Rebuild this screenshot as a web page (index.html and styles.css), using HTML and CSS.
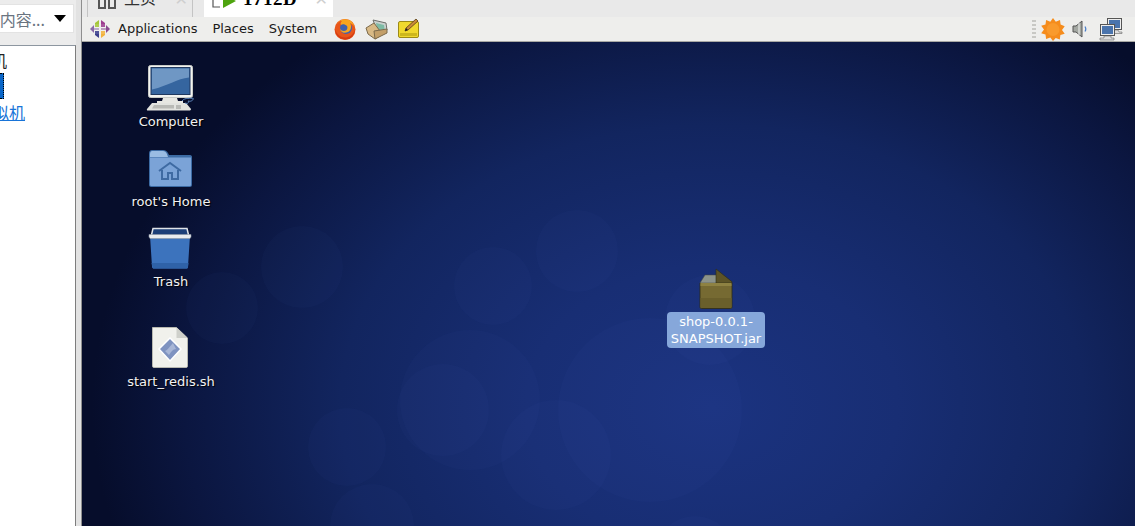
FILE: index.html
```html
<!DOCTYPE html>
<html lang="zh">
<head>
<meta charset="utf-8">
<title>VMware</title>
<link rel="stylesheet" href="styles.css">
</head>
<body>
<div class="app">
  <aside class="side">
    <div class="side-top">
      <div class="select">
        <span class="select-text">内容...</span>
        <span class="caret"></span>
      </div>
    </div>
    <div class="tree">
      <div class="tree-row first">虚拟机</div>
      <div class="tree-row sel"><span class="sel-box"></span></div>
      <div class="tree-row link"><a>虚拟机</a></div>
    </div>
  </aside>
  <main class="main">
    <div class="tabs">
      <div class="tab">
        <svg class="tab-ico" width="18" height="12" viewBox="0 0 18 12"><g fill="none" stroke="#555" stroke-width="2"><rect x="1" y="-6" width="6" height="14"/><rect x="11" y="-6" width="6" height="14"/></g></svg>
        <span class="tab-label">主页</span>
        <span class="tab-x">✕</span>
      </div>
      <div class="tab active">
        <svg class="tab-ico" width="24" height="12" viewBox="0 0 24 12"><path d="M1 0v7h7" fill="none" stroke="#555" stroke-width="1.2"/><path d="M11 -6 24 1 11 8z" fill="#4ea40f"/></svg>
        <span class="tab-label bold">1712D</span>
        <span class="tab-x">✕</span>
      </div>
    </div>
    <div class="panel">
      <div class="menu">
        <svg class="logo" width="22" height="22" viewBox="0 0 22 22">
          <path d="M10 2 6 5v4h4z" fill="#a4c639"/><path d="M12 2l4 3v4h-4z" fill="#9c3d8f"/>
          <path d="M10 20l-4-3v-4h4z" fill="#3b3f8c"/><path d="M12 20l4-3v-4h-4z" fill="#f2b33d"/>
          <path d="M1 11 5 7v3.500h5v1H5V15z" fill="#8a6aa8"/><path d="M21 11l-4-4v3.500h-5v1h5V15z" fill="#8a4a90"/>
          <path d="M6 6h4v4H6zM12 6h4v4h-4zM6 12h4v4H6zM12 12h4v4h-4z" fill="#fff" fill-opacity=".12"/>
        </svg>
        <span class="menu-item">Applications</span>
        <span class="menu-item">Places</span>
        <span class="menu-item">System</span>
      </div>
      <div class="launchers">
        <svg width="24" height="24" viewBox="0 0 24 24">
          <circle cx="12" cy="12.500" r="10.500" fill="#e8561a"/>
          <circle cx="13" cy="11" r="6" fill="#3f62ae"/>
          <path d="M3 9c2-6 8-8 13-6 3 1 5 4 6 8-1-3-3-4-5-5 2 3 1 8-2 9-4 2-8 0-8-4 0 2 2 3 4 3 3 0 4-3 3-5-2-2-5-2-6-1-1-2 0-3 1-4-3 0-5 2-6 5z" fill="#f9a51f"/>
          <path d="M2 12c0 7 6 11 11 10.500 5 0 9-5 9-10-2 6-6 8-10 8-5 0-8-3-10-8.500z" fill="#d63c12"/>
        </svg>
        <svg width="24" height="22" viewBox="0 0 24 22">
          <path d="M8 2 21 5l1 7-9 3z" fill="#c9d2cf" stroke="#6f6f6a"/>
          <path d="M11 5l8 2 .5 4-7 1.500z" fill="#7ebba5"/>
          <path d="M1 10 9 5l6 8v5l-5 3-7-5z" fill="#d8b985" stroke="#7b6a4c"/>
          <path d="M9 13l13-2v4l-12 6z" fill="#c39f69" stroke="#7b6a4c"/>
        </svg>
        <svg width="24" height="22" viewBox="0 0 24 22">
          <rect x="1.500" y="3.500" width="20" height="16" rx="1.500" fill="#f1d92e" stroke="#9c8a17"/>
          <rect x="3" y="15" width="17" height="3" fill="#cdb71d"/>
          <path d="M8 13l1-3L19 1l2 2L11 12z" fill="#c98b3a" stroke="#5b3d16" stroke-width=".8"/>
          <path d="M8 13l1-3 2 2z" fill="#222"/>
        </svg>
      </div>
      <div class="tray">
        <span class="grip"></span>
        <svg class="tray-sun" width="24" height="24" viewBox="0 0 24 24">
          <path d="M12 1l2.800 3.700 4.200-1.700.6 4.500 4.100 1.800-2.700 3.700 2.700 3.700-4.300 1.300-.6 4.500-4.100-1.400L12 24l-2.700-3.400-4.200 1.400-.6-4.500L.2 16.200 3 12.500.2 8.800l4.300-1.300.6-4.500 4.200 1.700z" fill="#f58c1c"/>
          <circle cx="12" cy="12.500" r="6.500" fill="#f99a2c"/>
        </svg>
        <svg class="tray-vol" width="18" height="20" viewBox="0 0 18 20">
          <path d="M1 7h3l6-5v16l-6-5H1z" fill="#a4a8a2" stroke="#555"/>
          <path d="M7 4v12" stroke="#fff" stroke-opacity=".6" stroke-width="1.500"/>
          <path d="M13 7.500c1 1.500 1 3.500 0 5" fill="none" stroke="#4a7fc9" stroke-width="1.200"/>
        </svg>
        <svg class="tray-net" width="24" height="23" viewBox="0 0 24 23">
          <rect x="8.500" y=".5" width="14" height="11" fill="#eee" stroke="#555"/><rect x="10" y="2" width="11" height="8" fill="#4a74ad"/>
          <path d="M13 12h6l1 2h3v1.500H12z" fill="#ddd" stroke="#666" stroke-width=".6"/>
          <rect x="1.500" y="6.500" width="14" height="11" fill="#eee" stroke="#555"/><rect x="3" y="8" width="11" height="8" fill="#4a74ad"/>
          <path d="M5 18h7v2h3v2H1v-2h4z" fill="#ddd" stroke="#666" stroke-width=".6"/>
        </svg>
      </div>
    </div>
    <div class="desktop">
      <svg class="wall" width="1053" height="484" viewBox="82 42 1053 484">
        <g fill="#6f8fe8" fill-opacity=".03">
          <circle cx="302" cy="267" r="41"/><circle cx="222" cy="308" r="36"/>
          <circle cx="493" cy="286" r="39"/><circle cx="577" cy="251" r="41"/>
          <circle cx="470" cy="400" r="70"/><circle cx="443" cy="410" r="46"/>
          <circle cx="347" cy="447" r="39"/><circle cx="556" cy="455" r="55"/>
          <circle cx="372" cy="526" r="42"/><circle cx="650" cy="410" r="92"/>
          <circle cx="710" cy="320" r="45"/><circle cx="695" cy="556" r="40"/>
        </g>
      </svg>
      <div class="icons">
        <div class="dicon">
          <svg width="48" height="48" viewBox="0 0 48 48">
            <rect x="2.500" y="2.500" width="44" height="32" rx="2" fill="#f2f3f1" stroke="#c8cbc6"/>
            <rect x="5" y="4.500" width="39" height="27" fill="#35659f" stroke="#20395f"/>
            <path d="M6 5.500h37v9c-12 1-20 8-37 12z" fill="#6f97c4"/>
            <path d="M17 35h14l1 3h5v2H11v-2h5z" fill="#e7e7e2"/>
            <path d="M6 40h34l5 6c0 1-1 1.500-2 1.500H2c-1 0-1.500-.5-1-1.500z" fill="#e2e3df"/>
            <path d="M8 42h20v3.500H6zM30 42h5v4h-5z" fill="#b9bab6"/>
            <path d="M36 38c3-4 9-2 11-3 1 2-2 4-5 3 2 2-1 3-3 2" fill="none" stroke="#5e86bb"/>
          </svg>
          <span class="dlabel">Computer</span>
        </div>
        <div class="dicon">
          <svg width="48" height="48" viewBox="0 0 48 48">
            <path d="M3 11c0-3 1-4 3-4h11c2 0 4 1 5 3l1 2h21c1.500 0 2 1 2 2v28c0 1-1 2-2 2H5c-1 0-2-1-2-2z" fill="#3c6ba4"/>
            <path d="M4 14.500h41v27c0 1-.5 1.500-1.500 1.500h-38c-1 0-1.500-.5-1.500-1.500z" fill="#7ba3d7"/>
            <path d="M4 14v-3c0-2 1-3 2-3h11c2 0 3 1 4 3l1 3z" fill="#9abce3"/>
            <path d="M13 28 24 20l11 8M16 27v9h6v-6h4v6h6v-9" fill="none" stroke="#3e6aa2" stroke-width="2"/>
          </svg>
          <span class="dlabel">root's Home</span>
        </div>
        <div class="dicon">
          <svg width="48" height="48" viewBox="0 0 48 48">
            <path d="M5 14 7 5.500h34L43 14z" fill="#1c3f78" stroke="#dfe3e8" stroke-width="1.500"/>
            <path d="M4 12.500h40l-2 31c0 1.500-1 2-2 2H8c-1 0-2-.5-2-2z" fill="#3c73bd"/>
            <path d="M5.500 40h37l-.5 4c0 1-.5 1.500-1.500 1.500H8c-1 0-1.500-.5-1.500-1.500z" fill="#2f62a8"/>
            <path d="M3 11.500h42v2.500l-1 1.500H4l-1-1.500z" fill="#e9ecef" stroke="#8b95a3" stroke-width=".6"/>
          </svg>
          <span class="dlabel">Trash</span>
        </div>
        <div class="dicon script">
          <svg width="48" height="48" viewBox="0 0 48 48">
            <path d="M6.500 4.500h24L41.500 15v28c0 1-.5 1.500-1.500 1.500H8c-1 0-1.500-.5-1.500-1.500z" fill="#f1f1ec" stroke="#b8b8b0"/>
            <path d="M30.500 4.500V15h11z" fill="#cfd0ca"/>
            <path d="M24 15l11 11-11 12-11-12z" fill="#7f93c0" stroke="#fff" stroke-width="1.500"/>
            <path d="M19 28c3-1 5-5 8-8l3 6c-3 0-5 3-7 6z" fill="#a8b6d6"/>
          </svg>
          <span class="dlabel">start_redis.sh</span>
        </div>
      </div>
      <div class="jar">
        <svg width="48" height="44" viewBox="0 0 48 44">
          <path d="M8 17h32v24c0 .8-.5 1.500-1.500 1.500h-29C8.500 42.500 8 41.800 8 41z" fill="#766a32" stroke="#2e2b14" stroke-width=".8"/>
          <path d="M8 17 13 9h17l-6 8z" fill="#8c938a" stroke="#4b4b3a" stroke-width=".5"/>
          <path d="M24 3l16 12.700V17H24z" fill="#5d5426" stroke="#2e2b14" stroke-width=".6"/>
          <path d="M8.500 17H39.500v3H8.500z" fill="#8e8242"/>
          <path d="M8.500 32h31v9c0 .6-.4 1-1 1h-29c-.6 0-1-.4-1-1z" fill="#6a5f2b"/>
        </svg>
        <span class="jar-label">shop-0.0.1-<br>SNAPSHOT.jar</span>
      </div>
    </div>
  </main>
</div>
</body>
</html>
```
FILE: styles.css
```css
* { box-sizing: border-box; }
html, body { margin: 0; height: 100%; overflow: hidden; }
body { font-family: "DejaVu Sans", sans-serif; }
.app { display: grid; grid-template-columns: 82px 1fr; width: 1135px; height: 526px; overflow: hidden; }

.side { background: #e2e2e2; border-right: 1px solid #8f8f8f; display: flex; flex-direction: column; padding-right: 5px; overflow: hidden; }
.side-top { background: #ececec; height: 45px; padding-top: 4px; border-right: 1px solid #ececec; }
.select { height: 29px; width: 74px; background: #fff; border: 1px solid #e3e3e3; border-left: 0; display: flex; align-items: center; justify-content: flex-end; gap: 9px; padding-right: 7px; overflow: hidden; white-space: nowrap; font: 16px "Noto Sans CJK SC", sans-serif; color: #6a7480; }
.select-text { flex: none; margin-left: -14px; }
.caret { flex: none; width: 0; height: 0; border: 6.500px solid transparent; border-top: 7px solid #000; border-bottom: 0; }
.tree { flex: 1; background: #fff; border-top: 1px solid #8d96a0; border-right: 1px solid #7d7d7d; padding-top: 1px; overflow: hidden; font: 16px/26px "Noto Sans CJK SC", sans-serif; white-space: nowrap; color: #222; }
.tree-row { height: 26px; margin-left: -41px; }
.tree-row.sel { margin-left: 0; }
.sel-box { display: block; width: 4px; height: 26px; background: #0a66c8; border: 1px dotted #000; border-left: 0; }
.tree-row.link { margin-left: -23px; color: #1874d8; }
.tree-row.link a { text-decoration: underline; }

.main { display: flex; flex-direction: column; min-width: 0; }
.tabs { height: 17px; background: #e9e9e9; display: flex; gap: 11px; padding-left: 5px; overflow: hidden; }
.tab { width: 106px; height: 17px; background: #e9e9e9; border-left: 1px solid #c4c4c4; border-right: 1px solid #c4c4c4; display: flex; align-items: flex-start; padding-left: 10px; position: relative; overflow: hidden; }
.tab.active { width: 129px; background: #fff; border-color: #fff; padding-left: 7px; }
.tab-ico { flex: none; display: block; }
.tab-label { margin-left: 8px; margin-top: -13px; font: 16px/20px "Noto Sans CJK SC", sans-serif; color: #333; }
.tab-label.bold { margin-left: 7px; margin-top: -12px; font: bold 19px/22px "Liberation Serif", serif; color: #000; letter-spacing: .5px; }
.tab-x { position: absolute; right: 4px; top: -8px; font-size: 16px; line-height: 16px; color: #cfcfcf; }

.panel { height: 25px; background: #eeeeec; border-bottom: 1px solid #a8a8a4; display: flex; align-items: center; font-size: 13px; color: #1a1a1a; }
.menu { display: flex; align-items: center; padding-left: 7px; line-height: 16px; }
.logo { flex: none; margin-right: 7px; }
.menu-item { margin-right: 15px; padding-bottom: 1px; }
.launchers { display: flex; align-items: center; gap: 8px; margin-left: 1px; }
.tray { margin-left: auto; display: flex; align-items: center; padding-right: 12px; }
.grip { width: 4px; height: 18px; margin-right: 5px; background: repeating-linear-gradient(#c8c8c4 0 2px, transparent 2px 4px); }
.tray-vol { margin-left: 7px; }
.tray-net { margin-left: 9px; }

.desktop { flex: 1; position: relative; overflow: hidden; background:
  radial-gradient(ellipse 620px 470px at 630px 365px, #1b3380 0%, #182e74 30%, #12255f 60%, #0b1640 85%, #060d2b 100%), #060d2b; }
.wall { position: absolute; left: 0; top: 0; }
.icons { position: relative; display: flex; flex-direction: column; align-items: center; gap: 13px; width: 178px; padding-top: 21px; }
.dicon { display: flex; flex-direction: column; align-items: center; gap: 3px; width: 98px; }
.dicon svg { display: block; margin-left: -2px; }
.dicon.script { margin-top: 20px; }
.dlabel { height: 16px; font-size: 13px; line-height: 16px; color: #f2f2f2; text-shadow: 1px 1px 1px #000; white-space: nowrap; }
.jar { position: absolute; left: 585px; top: 224px; width: 98px; display: flex; flex-direction: column; align-items: center; }
.jar svg { display: block; margin-bottom: 2px; }
.jar-label { width: 98px; height: 36px; background: #86a7da; border-radius: 4px; color: #fff; font-size: 13px; line-height: 17px; text-align: center; padding-top: 1px; white-space: nowrap; }
```
